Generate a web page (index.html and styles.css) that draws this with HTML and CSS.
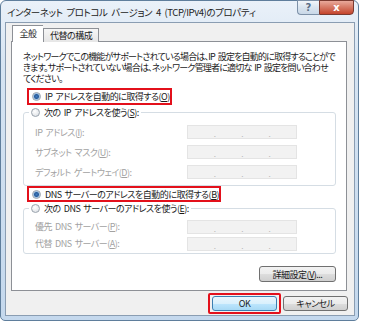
FILE: index.html
```html
<!DOCTYPE html>
<html lang="ja">
<head>
    <meta charset="UTF-8">
    <title>インターネット プロトコル バージョン 4 (TCP/IPv4)のプロパティ</title>
    <link rel="stylesheet" href="styles.css">
</head>
<body>
    <div class="window">
        <div class="titlebar">
            <span class="title">インターネット プロトコル バージョン 4 (TCP/IPv4)のプロパティ</span>
            <div class="caption">
                <span class="cap-help">?</span>
                <span class="cap-close">x</span>
            </div>
        </div>

        <div class="client">
            <div class="tabs">
                <span class="tab active">全般</span>
                <span class="tab">代替の構成</span>
            </div>

            <div class="panel">
                <p class="desc">ネットワークでこの機能がサポートされている場合は、IP 設定を自動的に取得することがで<br>きます。サポートされていない場合は、ネットワーク管理者に適切な IP 設定を問い合わせ<br>てください。</p>

                <div class="mark mark-ip">
                    <span class="radio checked"></span>
                    <span>IP アドレスを自動的に取得する(<u>O</u>)</span>
                </div>

                <fieldset class="group">
                    <legend><span class="radio"></span><span>次の IP アドレスを使う(<u>S</u>):</span></legend>
                    <div class="row">
                        <span class="label">IP アドレス(<u>I</u>):</span>
                        <span class="ipbox"><i></i><b>.</b><i></i><b>.</b><i></i><b>.</b><i></i></span>
                    </div>
                    <div class="row">
                        <span class="label">サブネット マスク(<u>U</u>):</span>
                        <span class="ipbox"><i></i><b>.</b><i></i><b>.</b><i></i><b>.</b><i></i></span>
                    </div>
                    <div class="row">
                        <span class="label">デフォルト ゲートウェイ(<u>D</u>):</span>
                        <span class="ipbox"><i></i><b>.</b><i></i><b>.</b><i></i><b>.</b><i></i></span>
                    </div>
                </fieldset>

                <div class="mark mark-dns">
                    <span class="radio checked"></span>
                    <span>DNS サーバーのアドレスを自動的に取得する(<u>B</u>)</span>
                </div>

                <fieldset class="group group-dns">
                    <legend><span class="radio"></span><span>次の DNS サーバーのアドレスを使う(<u>E</u>):</span></legend>
                    <div class="row">
                        <span class="label">優先 DNS サーバー(<u>P</u>):</span>
                        <span class="ipbox"><i></i><b>.</b><i></i><b>.</b><i></i><b>.</b><i></i></span>
                    </div>
                    <div class="row">
                        <span class="label">代替 DNS サーバー(<u>A</u>):</span>
                        <span class="ipbox"><i></i><b>.</b><i></i><b>.</b><i></i><b>.</b><i></i></span>
                    </div>
                </fieldset>

                <div class="advanced">
                    <button class="btn btn-wide">詳細設定(<u>V</u>)...</button>
                </div>
            </div>

            <div class="footer">
                <div class="mark-ok">
                    <button class="btn btn-default">OK</button>
                </div>
                <button class="btn">キャンセル</button>
            </div>
        </div>
    </div>
</body>
</html>
```

FILE: styles.css
```css
body {
    margin: 0;
    background: #fff;
    font-family: "Noto Sans CJK JP", "Noto Sans", sans-serif;
    font-feature-settings: "palt";
    font-size: 9px;
    letter-spacing: -0.5px;
    word-spacing: 1.5px;
    color: #1a1a1a;
}

.window {
    width: 359px;
    height: 321px;
    box-sizing: border-box;
    border: 1px solid #5f7e9c;
    border-radius: 6px 6px 5px 5px;
    background: linear-gradient(#eaf1f9, #d6e4f2 20%, #c4d8ed);
    padding: 0 3px 4px 4px;
    display: flex;
    flex-direction: column;
}

/* タイトルバー */
.titlebar {
    height: 21px;
    display: flex;
    align-items: flex-start;
}

.title {
    padding-left: 2px;
    font-size: 9.5px;
    letter-spacing: -0.4px;
    word-spacing: 2px;
    line-height: 22px;
    color: #222;
    white-space: nowrap;
}

.caption {
    display: flex;
    margin-left: auto;
    margin-top: -1px;
    margin-right: 1px;
}

.cap-help,
.cap-close {
    height: 15px;
    box-sizing: border-box;
    display: flex;
    align-items: center;
    justify-content: center;
    font-family: "DejaVu Sans", sans-serif;
    font-size: 10px;
    font-weight: bold;
    letter-spacing: 0;
}

.cap-help {
    width: 22px;
    border: 1px solid #7d91a8;
    border-right: none;
    border-radius: 0 0 0 4px;
    background: linear-gradient(#f2f6fa, #d9e4ef 50%, #c9d8e8);
    color: #5a6f88;
}

.cap-close {
    width: 35px;
    border: 1px solid #7a3a30;
    border-radius: 0 0 4px 0;
    background: linear-gradient(#e9a99b, #d57763 50%, #c5442c);
    color: #fff;
}

/* クライアント領域 */
.client {
    width: 350px;
    height: 294px;
    box-sizing: border-box;
    border: 1px solid #8a9db2;
    background: #f0f0f0;
    padding: 2px 6px 0 5px;
}

.tabs {
    display: flex;
    align-items: flex-end;
    margin-left: 1px;
    margin-bottom: -1px;
    position: relative;
}

.tab {
    height: 14px;
    box-sizing: border-box;
    padding: 0 6px;
    border: 1px solid #8d9096;
    border-bottom: none;
    background: linear-gradient(#f6f6f6, #e6e6e6);
    line-height: 13px;
}

.tab.active {
    height: 17px;
    width: 31px;
    padding: 0;
    text-align: center;
    background: #fff;
    border-right: none;
    line-height: 15px;
}

.panel {
    width: 336px;
    height: 250px;
    box-sizing: border-box;
    border: 1px solid #8d9096;
    background: #fff;
}

.desc {
    margin: 9px 0 0 11px;
    line-height: 11px;
    white-space: nowrap;
    letter-spacing: -0.8px;
}

/* 強調の赤枠 */
.mark {
    display: flex;
    align-items: center;
    gap: 4px;
    height: 17px;
    box-sizing: border-box;
    margin: 4px 0 0 15px;
    padding-left: 3px;
    border: 2px solid #e3101b;
    white-space: nowrap;
}

.mark-ip {
    width: 145px;
}

.mark-dns {
    width: 194px;
    height: 16px;
    margin-top: 0;
}

/* ラジオボタン */
.radio {
    display: inline-block;
    width: 9px;
    height: 9px;
    box-sizing: border-box;
    border: 1px solid #9aa3ad;
    border-radius: 50%;
    background: radial-gradient(circle at 40% 35%, #fff, #e3e6ea 70%);
    flex: none;
}

.radio.checked {
    background: radial-gradient(circle, #3d7ac0 0, #2b5d9a 2px, #9fc4e8 3px, #f2f2f2 4px);
}

/* グループ */
.group {
    width: 313px;
    box-sizing: border-box;
    margin: 1px 0 0 11px;
    padding: 3px 0 3px 11px;
    border: 1px solid #d5dde4;
    border-radius: 3px;
}

.group legend {
    display: flex;
    align-items: center;
    gap: 4px;
    margin-left: -6px;
    padding: 0 2px;
    line-height: 13px;
    white-space: nowrap;
}

.row {
    display: flex;
    align-items: center;
    height: 20px;
}

.group-dns {
    margin-top: 0;
    padding-top: 3px;
    padding-bottom: 1px;
}

.group-dns .row {
    height: 17px;
}

.label {
    width: 152px;
    color: #a2a2a2;
    white-space: nowrap;
}

.ipbox {
    display: flex;
    align-items: flex-end;
    width: 110px;
    height: 14px;
    box-sizing: border-box;
    border: 1px solid #e4e4e4;
    background: #f2f2f2;
    color: #b4b4b4;
    font-size: 8px;
    line-height: 9px;
}

.ipbox i {
    flex: 1;
}

.ipbox b {
    font-weight: normal;
}

/* ボタン */
.advanced {
    display: flex;
    justify-content: flex-end;
    margin: 12px 10px 0 0;
}

.btn {
    height: 15px;
    width: 65px;
    box-sizing: border-box;
    padding: 0;
    border: 1px solid #707070;
    border-radius: 3px;
    background: linear-gradient(#f2f2f2, #ebebeb 50%, #dddddd 51%, #cfcfcf);
    font-family: inherit;
    font-feature-settings: "palt";
    font-size: 9px;
    letter-spacing: -0.5px;
    color: #1a1a1a;
    line-height: 13px;
}

.btn-wide {
    width: 77px;
    height: 16px;
}

.btn-default {
    border-color: #3c7fb1;
    background: linear-gradient(#eaf6fd, #d9f0fc 50%, #bee6fd 51%, #a7d9f5);
}

.footer {
    display: flex;
    justify-content: flex-end;
    align-items: center;
    gap: 2px;
    margin-top: 2px;
}

.mark-ok {
    padding: 1px 2px;
    border: 2px solid #e3101b;
    border-radius: 2px;
    display: flex;
}
```
